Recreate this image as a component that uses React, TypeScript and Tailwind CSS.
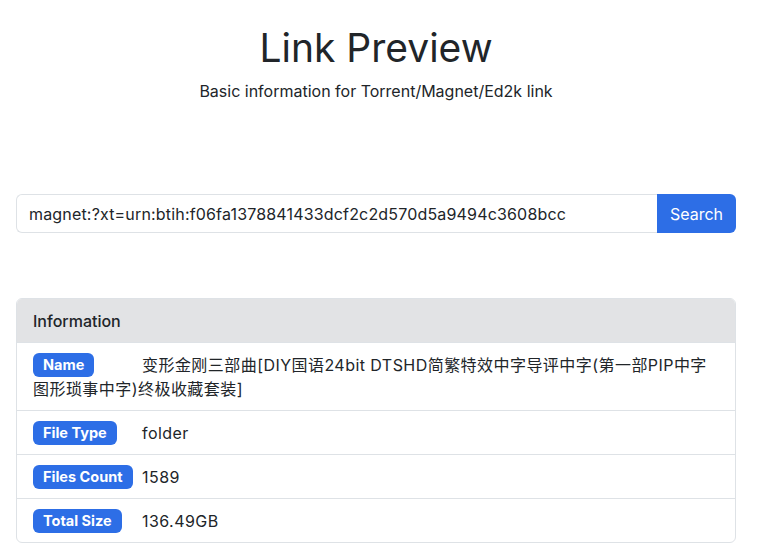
import React, { useState } from 'react';

const FONT = "font-['Inter','Noto_Sans_CJK_SC',sans-serif]";

type Row = { label: string; value: string };

const rows: Row[] = [
  { label: 'Name', value: '变形金刚三部曲[DIY国语24bit DTSHD简繁特效中字导评中字(第一部PIP中字图形琐事中字)终极收藏套装]' },
  { label: 'File Type', value: 'folder' },
  { label: 'Files Count', value: '1589' },
  { label: 'Total Size', value: '136.49GB' },
];

export default function App() {
  const [link, setLink] = useState('magnet:?xt=urn:btih:f06fa1378841433dcf2c2d570d5a9494c3608bcc');

  return (
    <div className={`min-h-screen bg-white text-[#212529] pl-4 pr-6 ${FONT}`}>
      <header className="pt-6 text-center">
        <h1 className="text-[39px] leading-[48px] font-normal mb-[7px]">Link Preview</h1>
        <p className="text-[16px] leading-6">Basic information for Torrent/Magnet/Ed2k link</p>
      </header>

      <div className="mt-[91px] flex h-[39px]">
        <input
          value={link}
          onChange={(e) => setLink(e.target.value)}
          className="flex-1 min-w-0 border border-[#dee2e6] border-r-0 rounded-l-[6px] px-3 text-[16px] tracking-[0.17px] text-[#212529] outline-none"
        />
        <button className="w-[79px] bg-[#2d6ee6] text-white text-[16px] rounded-r-[6px]">Search</button>
      </div>

      <div className="mt-[65px] border border-[#dee2e6] rounded-[6px] overflow-hidden">
        <div className="bg-[#e2e3e5] px-4 pt-[10px] pb-[9px] text-[16px] leading-6 font-medium border-b border-[#dee2e6]">
          Information
        </div>
        {rows.map((r, i) => (
          <div
            key={r.label}
            className={`px-4 pt-[10px] pb-[9px] text-[16px] leading-6 ${i > 0 ? 'border-t border-[#dee2e6]' : ''}`}
          >
            <span className="inline-block w-[109px] h-6 align-top">
              <span className="block w-fit h-6 bg-[#2d6ee6] text-white font-bold text-[14.5px] leading-6 px-[10px] rounded-[6px]">
                {r.label}
              </span>
            </span>
            <span className="tracking-[0.45px]">{r.value}</span>
          </div>
        ))}
      </div>
    </div>
  );
}
